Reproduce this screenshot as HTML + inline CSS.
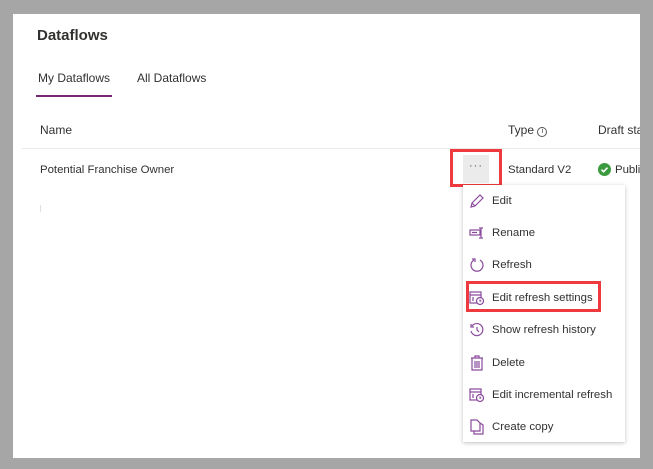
<!DOCTYPE html>
<html><head><meta charset="utf-8"><style>
*{margin:0;padding:0;box-sizing:border-box}
body{width:653px;height:469px;background:#a6a6a6;font-family:"Liberation Sans",sans-serif;position:relative;overflow:hidden;color:#323130}
.page{position:absolute;left:13px;top:14px;width:627px;height:444px;background:#fff}
.a{position:absolute;white-space:nowrap}
.menu{position:absolute;left:463px;top:185px;width:162px;height:257px;background:#fff;box-shadow:0 1px 4px rgba(0,0,0,.25)}
.it{position:absolute;left:0;width:162px;height:30px;font-size:11.4px;color:#323130}
.it svg{position:absolute;left:6px;top:7px}
.it span{position:absolute;left:29px;top:9px}
.red{position:absolute;border:3px solid #ee3a3f}
</style></head><body>
<div class="page"></div>
<div class="a" style="left:37px;top:27px;font-size:15px;font-weight:bold;color:#323130">Dataflows</div>
<div class="a" style="left:38px;top:71px;font-size:12px">My Dataflows</div>
<div style="position:absolute;left:36px;top:95px;width:76px;height:2px;background:#742774"></div>
<div class="a" style="left:137px;top:71px;font-size:12px">All Dataflows</div>
<div class="a" style="left:40px;top:123px;font-size:12px">Name</div>
<div class="a" style="left:508px;top:123px;font-size:12px">Type <span style="display:inline-block;width:10px;height:10px;border:1px solid #555;border-radius:50%;font-size:7px;text-align:center;line-height:8px;vertical-align:1px">i</span></div>
<div class="a" style="left:598px;top:123px;font-size:12px">Draft sta</div>
<div style="position:absolute;left:22px;top:148px;width:618px;height:1px;background:#edebe9"></div>
<div class="a" style="left:40px;top:164px;font-size:11.4px">Potential Franchise Owner</div>
<div style="position:absolute;left:40px;top:205px;width:1px;height:7px;background:#e0e0e0"></div>
<div style="position:absolute;left:463px;top:155px;width:26px;height:28px;background:#ebebeb"></div>
<div class="a" style="left:469px;top:160px;font-size:11px;color:#555;letter-spacing:1px">···</div>
<div class="red" style="left:450px;top:149px;width:52px;height:38px"></div>
<div class="a" style="left:508px;top:164px;font-size:11.4px">Standard V2</div>
<svg style="position:absolute;left:598px;top:163px" width="13" height="13"><circle cx="6.5" cy="6.5" r="6.5" fill="#3c9a3e"/><path d="M3.5 6.7l2 2 4-4" stroke="#fff" stroke-width="1.6" fill="none"/></svg>
<div class="a" style="left:615px;top:164px;font-size:11.4px">Publi</div>
<div style="position:absolute;left:640px;top:0;width:13px;height:469px;background:#a6a6a6"></div>
<div class="menu">
<div class="it" style="top:1px"><svg width="16" height="16" fill="none" stroke="#8a4a9c" stroke-width="1.2"><path d="M2 14l1-4 8-8 3 3-8 8z M3 10l3 3"/></svg><span>Edit</span></div>
<div class="it" style="top:33px"><svg width="16" height="16" fill="none" stroke="#8a4a9c" stroke-width="1.2"><rect x="1" y="5" width="10" height="5"/><path d="M3 7.5h5 M12 3v10 M10 3h4 M10 13h4"/></svg><span>Rename</span></div>
<div class="it" style="top:65px"><svg width="16" height="16" fill="none" stroke="#8a4a9c" stroke-width="1.2"><path d="M5 3A6 6 0 1 0 11 3 M3 2h3v3"/></svg><span>Refresh</span></div>
<div class="it" style="top:98px"><svg width="16" height="16" fill="none" stroke="#8a4a9c" stroke-width="1.2"><rect x="1" y="2" width="11" height="11"/><path d="M1 5h11 M3 8h2 M3 10h2"/><circle cx="11" cy="11" r="3.5" fill="#fff"/><path d="M11 9.5v1.5h1.3"/></svg><span>Edit refresh settings</span></div>
<div class="it" style="top:130px"><svg width="16" height="16" fill="none" stroke="#8a4a9c" stroke-width="1.2"><path d="M3 4A6 6 0 1 1 2 9 M2 2v3h3 M8 5v3l2 2"/></svg><span>Show refresh history</span></div>
<div class="it" style="top:163px"><svg width="16" height="16" fill="none" stroke="#8a4a9c" stroke-width="1.2"><path d="M2 3h12 M6 3V1h4v2 M3 3v12h10V3 M6 6v7 M8 6v7 M10 6v7"/></svg><span>Delete</span></div>
<div class="it" style="top:195px"><svg width="16" height="16" fill="none" stroke="#8a4a9c" stroke-width="1.2"><rect x="1" y="2" width="11" height="11"/><path d="M1 5h11 M3 8h2 M3 10h2"/><circle cx="11" cy="11" r="3.5" fill="#fff"/><path d="M11 9.5v1.5h1.3"/></svg><span>Edit incremental refresh</span></div>
<div class="it" style="top:227px"><svg width="16" height="16" fill="none" stroke="#8a4a9c" stroke-width="1.2"><path d="M2 1h6l3 3v8H2z M5 12v3h9V6l-3-2"/></svg><span>Create copy</span></div>
</div>
<div class="red" style="left:466px;top:281px;width:135px;height:31px"></div>
</body></html>
